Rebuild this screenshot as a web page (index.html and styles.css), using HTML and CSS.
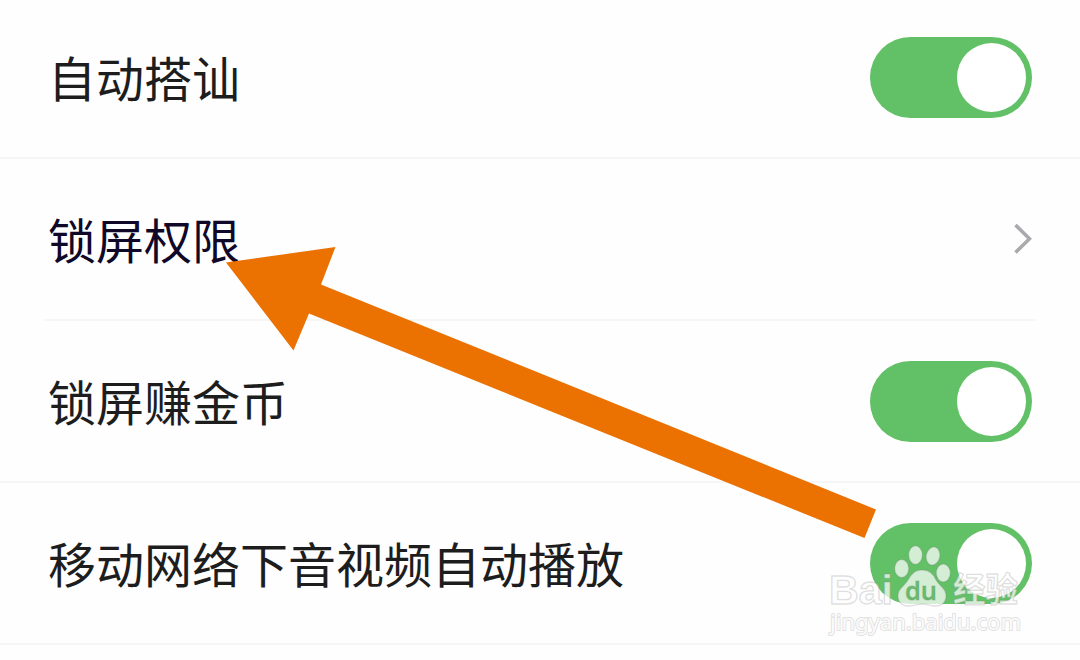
FILE: index.html
```html
<!DOCTYPE html>
<html lang="zh-CN">
<head>
    <meta charset="UTF-8">
    <meta name="viewport" content="width=device-width, initial-scale=1.0">
    <title>设置</title>
    <link rel="stylesheet" href="styles.css">
</head>
<body>
    <div class="settings">
        <div class="row">
            <p class="label">自动搭讪</p>
            <div class="switch"><div class="knob"></div></div>
        </div>
        <div class="row inset">
            <p class="label active">锁屏权限</p>
            <svg class="chevron" width="20" height="32" viewBox="0 0 20 32">
                <path d="M3.5 2L17.5 15.7L3.5 29.5"/>
            </svg>
        </div>
        <div class="row">
            <p class="label">锁屏赚金币</p>
            <div class="switch"><div class="knob"></div></div>
        </div>
        <div class="row">
            <p class="label">移动网络下音视频自动播放</p>
            <div class="switch"><div class="knob"></div></div>
        </div>
    </div>

    <!-- arrow pointing at the lock screen row -->
    <svg class="arrow" width="1080" height="660" viewBox="0 0 1080 660">
        <polygon points="226,262.5 335.5,247 321,284.5 876,509.5 864.5,538 309,313.5 293.5,350.5"/>
    </svg>

    <svg class="watermark" width="220" height="110" viewBox="820 535 220 110">
        <text class="brand" x="829" y="604" textLength="64" lengthAdjust="spacingAndGlyphs">Bai</text>
        <g class="paw">
            <ellipse cx="901.7" cy="568.5" rx="7" ry="9"/>
            <ellipse cx="915.5" cy="555" rx="6.8" ry="9.3"/>
            <ellipse cx="933" cy="556" rx="6.8" ry="9.2" transform="rotate(12 933 556)"/>
            <ellipse cx="943.3" cy="573" rx="7" ry="9"/>
            <path d="M922 570C930 570 934 575 936 580C940 587 946 588 946 596C946 603 941 606 935 606C929 606 927 604 922 604C917 604 915 606 909 606C903 606 898 603 898 596C898 588 904 587 908 580C911 575 914 570 922 570Z"/>
        </g>
        <text class="du" x="905" y="600" textLength="32" lengthAdjust="spacingAndGlyphs">du</text>
        <text class="brand cn" x="953" y="602" textLength="65" lengthAdjust="spacingAndGlyphs">经验</text>
        <text class="site" x="830" y="630" textLength="191" lengthAdjust="spacingAndGlyphs">jingyan.baidu.com</text>
    </svg>
</body>
</html>
```
FILE: styles.css
```css
*{
    margin: 0;
    padding: 0;
    box-sizing: border-box;
}
body{
    height: 660px;
    overflow: hidden;
    background-color: #fefefe;
    font-family: "Noto Sans CJK SC", sans-serif;
}
.settings{
    margin-top: -3px;
}
.row{
    display: flex;
    justify-content: space-between;
    align-items: center;
    height: 162px;
    padding: 0 48px;
    border-bottom: 2px solid #f6f6f6;
}
.row.inset{
    margin: 0 45px;
    padding: 0 3px;
}
.label{
    padding-bottom: 3px;
    font-size: 48px;
    line-height: 72px;
    color: #1d1d1d;
    white-space: nowrap;
}
.label.active{
    color: #100828;
}
.switch{
    display: flex;
    justify-content: flex-end;
    align-items: center;
    width: 162px;
    height: 81px;
    padding: 0 6px;
    border-radius: 41px;
    background-color: #62c066;
}
.knob{
    width: 69px;
    height: 69px;
    border-radius: 50%;
    background-color: #fff;
}
.chevron{
    fill: none;
    stroke: #aaaaae;
    stroke-width: 3.6;
}
.arrow{
    position: absolute;
    top: 0;
    left: 0;
    fill: #eb7100;
}
.watermark{
    position: absolute;
    top: 535px;
    left: 820px;
    overflow: visible;
}
.watermark text, .paw{
    fill: rgba(255, 255, 255, 0.72);
    stroke: rgba(130, 130, 130, 0.25);
    stroke-width: 1.4;
    stroke-linejoin: round;
}
.brand{
    font: bold 41px "Liberation Sans", sans-serif;
}
.brand.cn{
    font: bold 34px "Noto Sans CJK SC", sans-serif;
}
.watermark .du{
    font: 600 26px "Open Sans", sans-serif;
    fill: #62c066;
}
.watermark .site{
    font: 22.5px "Noto Sans", sans-serif;
    paint-order: stroke;
    fill: #fafafa;
    stroke: rgba(130, 130, 130, 0.24);
    stroke-width: 2;
}
```
